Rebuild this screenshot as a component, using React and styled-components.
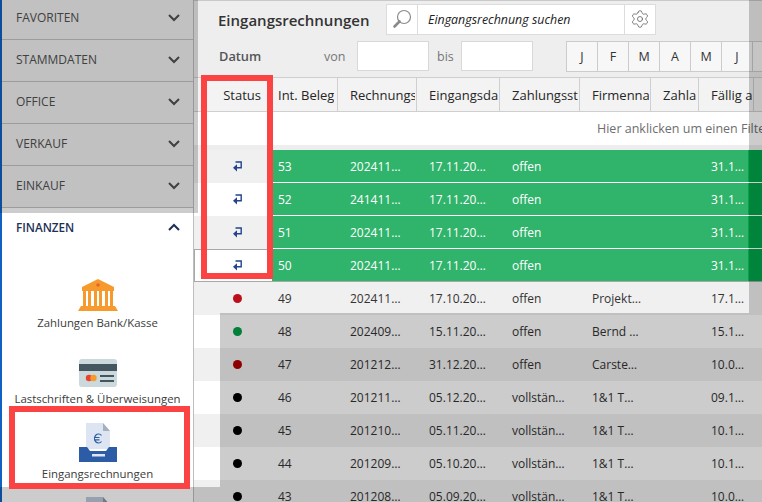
import React from "react";
import styled, { createGlobalStyle } from "styled-components";
import { Settings } from "lucide-react";

const GlobalStyle = createGlobalStyle`
    html, body {
        margin: 0;
        padding: 0;
        background: #FFFFFF;
    }

    body {
        font-family: "Open Sans", "Noto Sans", sans-serif;
    }
`;

const sections = ["FAVORITEN", "STAMMDATEN", "OFFICE", "VERKAUF", "EINKAUF"];
const months = ["J", "F", "M", "A", "M", "J", ""];
const headers = ["Int. Beleg", "Rechnungsnummer", "Eingangsdatum", "Zahlungsstatus", "Firmenname", "Zahlart", "Fällig am", ""];

const rows = [
    { id: 53, nr: "202411…", date: "17.11.20…", state: "offen", firm: "", due: "31.1…", status: "return" },
    { id: 52, nr: "241411…", date: "17.11.20…", state: "offen", firm: "", due: "31.1…", status: "return" },
    { id: 51, nr: "202411…", date: "17.11.20…", state: "offen", firm: "", due: "31.1…", status: "return" },
    { id: 50, nr: "202411…", date: "17.11.20…", state: "offen", firm: "", due: "31.1…", status: "return", selected: true },
    { id: 49, nr: "202411…", date: "17.10.20…", state: "offen", firm: "Projekt…", due: "17.1…", status: "#BC0F1C" },
    { id: 48, nr: "202409…", date: "15.11.20…", state: "offen", firm: "Bernd …", due: "15.1…", status: "#00A047" },
    { id: 47, nr: "201212…", date: "31.12.20…", state: "offen", firm: "Carste…", due: "10.0…", status: "#B00000" },
    { id: 46, nr: "201211…", date: "05.12.20…", state: "vollstän…", firm: "1&1 T…", due: "09.1…", status: "#000000" },
    { id: 45, nr: "201210…", date: "05.11.20…", state: "vollstän…", firm: "1&1 T…", due: "10.1…", status: "#000000" },
    { id: 44, nr: "201209…", date: "05.10.20…", state: "vollstän…", firm: "1&1 T…", due: "10.1…", status: "#000000" },
    { id: 43, nr: "201208…", date: "05.09.20…", state: "vollstän…", firm: "1&1 T…", due: "10.0…", status: "#000000" },
];

function Chevron({ up }) {
    return (
        <svg width="12" height="8" viewBox="0 0 12 8" fill="none">
            <path d={up ? "M1 7 L6 2 L11 7" : "M1 1 L6 6 L11 1"} stroke="currentColor" strokeWidth="2" />
        </svg>
    );
}

function BankIcon() {
    return (
        <svg width="40" height="32" viewBox="0 0 40 32">
            <path d="M20 0 L36 8 L36 10 L4 10 L4 8 Z" fill="#F79A2E" />
            <circle cx="20" cy="6" r="1.8" fill="#E8642C" />
            <rect x="4" y="10" width="32" height="2" fill="#F79A2E" />
            {[6, 11, 17, 22, 28, 33].map((x) => (
                <rect key={x} x={x - 1} y="12" width="3" height="15" fill="#F79A2E" />
            ))}
            <path d="M3 27 H37 L40 32 H0 Z" fill="#F79A2E" />
        </svg>
    );
}

function CardIcon() {
    return (
        <svg width="38" height="28" viewBox="0 0 38 28">
            <rect width="38" height="28" rx="3" fill="#CBD8DC" />
            <rect y="5" width="38" height="7" fill="#44565F" />
            <circle cx="10" cy="19" r="3.2" fill="#E8432E" />
            <circle cx="14.5" cy="19" r="3.2" fill="#F79A2E" />
            <rect x="21" y="16" width="14" height="2" fill="#44565F" />
            <rect x="21" y="21" width="14" height="2" fill="#44565F" />
        </svg>
    );
}

function InboxIcon() {
    return (
        <svg width="38" height="39" viewBox="0 0 38 39">
            <path d="M7 0 H24 L31 8 V26 H7 Z" fill="#DCE5F1" />
            <path d="M24 0 L31 8 H24 Z" fill="#A3B1BF" />
            <path d="M22.5 12.5 A4 4.5 0 1 0 22.5 18.5 M15 14.5 H20.5 M15 16.8 H20.5" stroke="#2C5CA5" strokeWidth="1.2" fill="none" />
            <path d="M0 24 H8 L11 28 H27 L30 24 H38 V39 H0 Z" fill="#2C5CA5" />
            <rect x="13" y="31" width="13" height="2.5" fill="#DCE5F1" />
        </svg>
    );
}

function DocIcon() {
    return (
        <svg width="30" height="30" viewBox="0 0 30 30">
            <path d="M3 0 H20 L27 8 V30 H3 Z" fill="#BCC8DA" />
            <path d="M20 0 L27 8 H20 Z" fill="#8B98A5" />
        </svg>
    );
}

function SearchIcon() {
    return (
        <svg width="22" height="22" viewBox="0 0 22 22" fill="none">
            <circle cx="13" cy="9" r="6.5" stroke="#8A8A8A" strokeWidth="1.2" />
            <path d="M8.5 13.5 L3.5 18.5" stroke="#8A8A8A" strokeWidth="2.6" strokeLinecap="round" />
        </svg>
    );
}

function ReturnIcon() {
    return (
        <svg width="9" height="11" viewBox="0 0 9 11" fill="none">
            <path d="M2.5 1 H8.2 V6.8 H3.5" stroke="#24428F" strokeWidth="1.4" />
            <path d="M0 6.8 L4 3.2 V10.4 Z" fill="#24428F" />
        </svg>
    );
}

export default function App() {
    return (
        <Page>
            <GlobalStyle />
            <Sidebar>
                {sections.map((name) => (
                    <Section key={name}>
                        {name}
                        <Chevron />
                    </Section>
                ))}
                <ActiveSection>
                    FINANZEN
                    <Chevron up />
                </ActiveSection>
                <NavList>
                    <NavItem $icon={32} $top={29} $gap={4}>
                        <BankIcon />
                        <span>Zahlungen Bank/Kasse</span>
                    </NavItem>
                    <NavItem $icon={28} $top={29} $gap={4}>
                        <CardIcon />
                        <span>Lastschriften &amp; Überweisungen</span>
                    </NavItem>
                    <NavItem $icon={39} $top={17} $gap={4}>
                        <InboxIcon />
                        <span>Eingangsrechnungen</span>
                    </NavItem>
                    <NavItem $icon={30} $top={16} $gap={0}>
                        <DocIcon />
                    </NavItem>
                </NavList>
            </Sidebar>

            <Main>
                <Toolbar>
                    <ToolbarRow>
                        <Title>Eingangsrechnungen</Title>
                        <SearchBox>
                            <IconCell><SearchIcon /></IconCell>
                            <SearchText>Eingangsrechnung suchen</SearchText>
                            <IconCell><Settings size={20} strokeWidth={1} color="#666" /></IconCell>
                        </SearchBox>
                    </ToolbarRow>
                    <FilterRow>
                        <DateLabel>Datum</DateLabel>
                        <RangeLabel $width={33}>von</RangeLabel>
                        <DateInput />
                        <RangeLabel $width={24}>bis</RangeLabel>
                        <DateInput />
                        <Months>
                            {months.map((m, i) => (
                                <Month key={i}>{m}</Month>
                            ))}
                        </Months>
                    </FilterRow>
                </Toolbar>

                <HeaderRow>
                    <StatusHead><HeadLabel>Status</HeadLabel></StatusHead>
                    {headers.map((h, i) => (
                        <HeadCell key={i} $first={i === 0}><HeadLabel>{h}</HeadLabel></HeadCell>
                    ))}
                </HeaderRow>
                <FilterHint>
                    <span>Hier anklicken um einen Filter</span>
                </FilterHint>

                <Rows>
                    {rows.map((row, i) => {
                        const isGreen = row.status === "return";
                        return (
                            <Row key={row.id} $green={isGreen} $odd={i % 2 === 1} $selected={row.selected}>
                                <StatusCell $odd={i % 2 === 1} $selected={row.selected}>
                                    {isGreen ? <ReturnIcon /> : <Dot $color={row.status} />}
                                </StatusCell>
                                <IdCell>{row.id}</IdCell>
                                <Cell>{row.nr}</Cell>
                                <Cell>{row.date}</Cell>
                                <Cell>{row.state}</Cell>
                                <Cell>{row.firm}</Cell>
                                <Cell />
                                <Cell>{row.due}</Cell>
                                <EndCell $green={isGreen} />
                            </Row>
                        );
                    })}
                </Rows>
            </Main>

            <Dim $x={0} $y={0} $w={198} $h={213} />
            <Dim $x={749} $y={0} $w={13} $h={487} />
            <Dim $x={220} $y={313} $w={529} $h={174} />
            <Dim $x={0} $y={487} $w={762} $h={15} />

            <Callout $x={201} $y={75} $w={72} $h={204} />
            <Callout $x={9} $y={406} $w={181} $h={83} />
        </Page>
    );
}

const Page = styled.div`
    position: relative;
    width: 762px;
    height: 502px;
    display: flex;
    overflow: hidden;
    background: #FFFFFF;
`;

const Sidebar = styled.div`
    width: 194px;
    height: 504px;
    margin-top: -2px;
    flex-shrink: 0;
    box-sizing: border-box;
    background: #FFFFFF;
    border-left: 2px solid #0F62C4;
    border-right: 1px solid #BDBDBD;
`;

const Section = styled.div`
    height: 42px;
    box-sizing: border-box;
    display: flex;
    align-items: center;
    justify-content: space-between;
    padding: 0 13px 2px 14px;
    background: #F2F2F2;
    border-bottom: 1px solid #C3C3C3;
    font-size: 12px;
    font-weight: 500;
    color: #505050;
`;

const ActiveSection = styled(Section)`
    padding-bottom: 4px;
    background: #FFFFFF;
    border-bottom-color: transparent;
    font-weight: 600;
    font-size: 11.7px;
    color: #1D3157;
`;

const NavList = styled.div`
    display: flex;
    flex-direction: column;
`;

const NavItem = styled.div`
    display: flex;
    flex-direction: column;
    align-items: center;
    padding-top: ${(props) => props.$top}px;
    gap: ${(props) => props.$gap}px;

    svg {
        height: ${(props) => props.$icon}px;
        flex-shrink: 0;
    }

    span {
        font-size: 11.4px;
        line-height: 15px;
        color: #3C3C3C;
        white-space: nowrap;
    }
`;

const Main = styled.div`
    flex: 1;
    min-width: 0;
    display: flex;
    flex-direction: column;
`;

const Toolbar = styled.div`
    height: 77px;
    box-sizing: border-box;
    flex-shrink: 0;
    padding-left: 24px;
    background: #EEEEEE;
    border-top: 1px solid #C9C9C9;
    overflow: hidden;
`;

const ToolbarRow = styled.div`
    display: flex;
    align-items: center;
    height: 36px;
`;

const Title = styled.div`
    width: 168px;
    padding-top: 1px;
    font-size: 15px;
    font-weight: 600;
    color: #333333;
    white-space: nowrap;
`;

const SearchBox = styled.div`
    width: 270px;
    height: 31px;
    box-sizing: border-box;
    display: flex;
    background: #FFFFFF;
    border: 1px solid #DCDCDC;
`;

const IconCell = styled.div`
    width: 30px;
    display: flex;
    align-items: center;
    justify-content: center;
    flex-shrink: 0;
`;

const SearchText = styled.div`
    flex: 1;
    display: flex;
    align-items: center;
    padding-left: 10px;
    border-left: 1px solid #DCDCDC;
    border-right: 1px solid #DCDCDC;
    font-size: 12.4px;
    font-style: italic;
    color: #222222;
`;

const FilterRow = styled.div`
    display: flex;
    align-items: center;
    height: 32px;
    margin-top: 3px;
`;

const DateLabel = styled.div`
    width: 106px;
    box-sizing: border-box;
    padding-left: 1px;
    flex-shrink: 0;
    font-size: 12.8px;
    font-weight: 600;
    color: #555555;
`;

const RangeLabel = styled.div`
    width: ${(props) => props.$width}px;
    flex-shrink: 0;
    font-size: 12.5px;
    color: #777777;
`;

const DateInput = styled.div`
    width: 72px;
    height: 30px;
    margin-right: 8px;
    box-sizing: border-box;
    flex-shrink: 0;
    background: #FFFFFF;
    border: 1px solid #D8D8D8;
`;

const Months = styled.div`
    display: flex;
    flex-shrink: 0;
    margin-left: 25px;
    border-left: 1px solid #CCCCCC;
`;

const Month = styled.div`
    width: 31px;
    height: 31px;
    box-sizing: border-box;
    flex-shrink: 0;
    display: flex;
    align-items: center;
    justify-content: center;
    background: #F7F7F7;
    border: 1px solid #CCCCCC;
    border-left: none;
    font-size: 12.5px;
    color: #333333;
`;

const HeaderRow = styled.div`
    display: grid;
    grid-template-columns: 78px 66px 79px 83px 80px 71px 48px 55px 8px;
    height: 35px;
    box-sizing: border-box;
    flex-shrink: 0;
    background: #F3F3F3;
    border-top: 1px solid #CFCFCF;
    border-bottom: 1px solid #CFCFCF;
`;

const HeadCell = styled.div`
    display: flex;
    align-items: center;
    min-width: 0;
    padding: 1px 1px 0 ${(props) => (props.$first ? "6px" : "12px")};
    border-right: 1px solid #CFCFCF;
    font-size: 13px;
    font-weight: 500;
    color: #262626;
`;

const HeadLabel = styled.span`
    display: block;
    overflow: hidden;
    white-space: nowrap;
`;

const StatusHead = styled(HeadCell)`
    justify-content: flex-end;
    padding: 1px 11px 0 0;
    border-right: none;
`;

const FilterHint = styled.div`
    height: 33px;
    flex-shrink: 0;
    display: flex;
    align-items: center;
    padding-left: 403px;
    overflow: hidden;
    white-space: nowrap;
    background: #FFFFFF;
    font-size: 12.5px;
    color: #6E6E6E;
`;

const Rows = styled.div`
    border-top: 5px solid #EEEEEE;
`;

const Row = styled.div`
    display: grid;
    grid-template-columns: 78px 66px 79px 83px 80px 71px 48px 49px 14px;
    height: 33px;
    box-sizing: border-box;
    background: ${(props) => (props.$green ? "#30B36B" : props.$odd ? "#FFFFFF" : "#F0F0F0")};
    border-bottom: 1px solid ${(props) => {
        if (props.$selected) return "#A8A8A8";
        if (props.$green) return "#FFFFFF";
        return "transparent";
    }};
    color: ${(props) => (props.$green ? "#FFFFFF" : "#333333")};
    font-size: 12px;
`;

const StatusCell = styled.div`
    display: flex;
    align-items: center;
    justify-content: center;
    padding-left: 9px;
    margin-bottom: ${(props) => (props.$selected ? "0" : "-1px")};
    background: ${(props) => (props.$odd ? "#FFFFFF" : "#F0F0F0")};
    box-shadow: ${(props) => (props.$selected ? "inset 1px 1px 0 #A8A8A8" : "none")};
`;

const Dot = styled.span`
    width: 9px;
    height: 9px;
    border-radius: 50%;
    background: ${(props) => props.$color};
`;

const Cell = styled.div`
    display: flex;
    align-items: center;
    padding-left: 12px;
    overflow: hidden;
    white-space: nowrap;
`;

const IdCell = styled(Cell)`
    padding-left: 6px;
`;

const EndCell = styled.div`
    background: ${(props) => (props.$green ? "#00A54B" : "transparent")};
`;

const Dim = styled.div`
    position: absolute;
    left: ${(props) => props.$x}px;
    top: ${(props) => props.$y}px;
    width: ${(props) => props.$w}px;
    height: ${(props) => props.$h}px;
    background: rgba(0, 0, 0, 0.2);
`;

const Callout = styled.div`
    position: absolute;
    left: ${(props) => props.$x}px;
    top: ${(props) => props.$y}px;
    width: ${(props) => props.$w}px;
    height: ${(props) => props.$h}px;
    box-sizing: border-box;
    border: 6px solid #FC4344;
`;
